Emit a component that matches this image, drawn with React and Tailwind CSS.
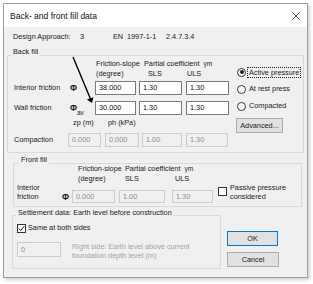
import React from 'react'

function Box({ w, value, disabled, h = 'h-[14px]' }) {
  return (
    <div className={`${w} ${h} shrink-0 border pl-[3px] flex items-center ${disabled ? 'border-[#cccccc] bg-[#f0f0f0] text-[#8d8d8d]' : 'border-[#7a7a7a] bg-white text-[#111]'}`}>
      {value}
    </div>
  )
}

function Radio({ checked, children }) {
  return (
    <div className="h-[12px] flex items-center pl-[1px]">
      <span className="w-[9px] h-[9px] rounded-full border border-[#333] bg-white flex items-center justify-center shrink-0">
        {checked && <span className="w-[4px] h-[4px] rounded-full bg-[#222]"></span>}
      </span>
      {children}
    </div>
  )
}

function Check({ checked }) {
  return (
    <span className="w-[9px] h-[9px] border border-[#333] bg-white shrink-0 flex items-center justify-center">
      {checked && (
        <svg width="7" height="7" viewBox="0 0 7 7">
          <path d="M0.8 3.6 L2.7 5.5 L6.2 1.2" fill="none" stroke="#222" strokeWidth="1" />
        </svg>
      )}
    </span>
  )
}

function Gamma() {
  return <span className="ml-[4px] text-[6.5px]">γm</span>
}

export default function App() {
  return (
    <div className="relative w-[313px] h-[284px] bg-white pt-[3px] pl-[3px] overflow-hidden whitespace-nowrap font-['Liberation_Sans',Arial,sans-serif] text-[7.3px] text-[#1a1a1a] leading-[10px]">
      <div className="w-[305px] h-[275px] border border-[#9c9c9c] bg-[#f0f0f0] flex flex-col shadow-[2px_2px_3px_rgba(0,0,0,0.18)]">
        {/* title bar */}
        <div className="h-[23px] bg-white flex items-center justify-between pl-[6px] pr-[7px]">
          <span className="text-[8.5px] text-[#111]">Back- and front fill data</span>
          <svg width="8" height="8" viewBox="0 0 8 8">
            <path d="M0.5 0.5 L7.5 7.5 M7.5 0.5 L0.5 7.5" stroke="#333" strokeWidth="0.9" />
          </svg>
        </div>

        {/* design approach */}
        <div className="mt-[5px] h-[10px] flex pl-[9px]">
          <span className="w-[67px]">Design Approach:</span>
          <span className="w-[33px]">3</span>
          <span className="w-[14px]">EN</span>
          <span className="w-[39px]">1997-1-1</span>
          <span>2.4.7.3.4</span>
        </div>

        {/* back fill */}
        <div className="relative mt-[13px] ml-[3px] w-[297px] h-[98px] shrink-0 border border-[#d9d9d9] flex">
          <span className="absolute -top-[9px] left-[3px] px-[2px] bg-[#f0f0f0]">Back fill</span>
          <div className="w-[224px] flex flex-col">
            <div className="mt-[3px] h-[10px] flex pl-[88px]">
              <span className="w-[48px]">Friction-slope</span>
              <span>Partial coefficient</span>
              <Gamma />
            </div>
            <div className="h-[10px] flex pl-[88px]">
              <span className="w-[52px]">(degree)</span>
              <span className="w-[39px]">SLS</span>
              <span>ULS</span>
            </div>
            <div className="mt-[2px] h-[14px] flex items-center">
              <span className="w-[62px] pl-[6px]">Interior friction</span>
              <span className="w-[25px] font-bold text-[8.5px]">Φ</span>
              <Box w="w-[41px]" value="38.000" />
              <div className="ml-[3px]"><Box w="w-[43px]" value="1.30" /></div>
              <div className="ml-[4px]"><Box w="w-[43px]" value="1.30" /></div>
            </div>
            <div className="mt-[6px] h-[14px] flex items-center">
              <span className="w-[62px] pl-[6px]">Wall friction</span>
              <span className="w-[25px] font-bold text-[8.5px]">Φ<sub className="font-normal text-[6.5px] align-[-2px]">av</sub></span>
              <Box w="w-[41px]" value="30.000" />
              <div className="ml-[3px]"><Box w="w-[43px]" value="1.30" /></div>
              <div className="ml-[4px]"><Box w="w-[43px]" value="1.30" /></div>
            </div>
            <div className="mt-[3px] h-[10px] flex pl-[65px]">
              <span className="w-[35px]">zp (m)</span>
              <span>ph (kPa)</span>
            </div>
            <div className="mt-[5px] h-[14px] flex items-center">
              <span className="w-[60px] pl-[6px]">Compaction</span>
              <Box w="w-[33px]" value="0.000" disabled />
              <div className="ml-[4px]"><Box w="w-[34px]" value="0.000" disabled /></div>
              <div className="ml-[3px]"><Box w="w-[40px]" value="1.00" disabled /></div>
              <div className="ml-[4px]"><Box w="w-[42px]" value="1.30" disabled /></div>
            </div>
          </div>
          <div className="flex flex-col pl-[4px]">
            <div className="mt-[10px]">
              <Radio checked>
                <span className="ml-[1px] border border-dotted border-[#222] px-[1px] leading-[9px]">Active pressure</span>
              </Radio>
            </div>
            <div className="mt-[5px]">
              <Radio><span className="ml-[3px]">At rest press</span></Radio>
            </div>
            <div className="mt-[5px]">
              <Radio><span className="ml-[3px]">Compacted</span></Radio>
            </div>
            <div className="mt-[6px] w-[47px] h-[15px] border border-[#adadad] bg-[#e1e1e1] flex items-center justify-center">
              Advanced...
            </div>
          </div>
        </div>

        {/* front fill */}
        <div className="relative mt-[10px] ml-[9px] w-[289px] h-[44px] shrink-0 border border-[#d9d9d9] flex flex-col">
          <span className="absolute -top-[9px] left-[5px] px-[2px] bg-[#f0f0f0]">Front fill</span>
          <div className="h-[10px] flex pl-[64px]">
            <span className="w-[47px]">Friction-slope</span>
            <span>Partial coefficient</span>
            <Gamma />
          </div>
          <div className="h-[10px] flex pl-[64px]">
            <span className="w-[47px]">(degree)</span>
            <span className="w-[50px]">SLS</span>
            <span>ULS</span>
          </div>
          <div className="h-[20px] flex items-start">
            <span className="w-[48px] pl-[3px] -mt-[1px] leading-[9px]">Interior<br />friction</span>
            <span className="w-[10px] mt-[8px] font-bold text-[8.5px]">Φ</span>
            <div className="mt-[6px]"><Box w="w-[43px]" h="h-[13px]" value="0.000" disabled /></div>
            <div className="mt-[6px] ml-[4px]"><Box w="w-[46px]" h="h-[13px]" value="1.00" disabled /></div>
            <div className="mt-[6px] ml-[7px]"><Box w="w-[41px]" h="h-[13px]" value="1.30" disabled /></div>
            <div className="mt-[3px] ml-[5px]"><Check /></div>
            <span className="ml-[3px] -mt-[1px] leading-[9px]">Passive pressure<br />considered</span>
          </div>
        </div>

        {/* settlement + buttons */}
        <div className="flex">
          <div className="relative mt-[8px] ml-[8px] w-[209px] h-[54px] shrink-0 border border-[#d9d9d9] flex flex-col">
            <span className="absolute -top-[8px] left-[3px] px-[2px] bg-[#f0f0f0]">Settlement data: Earth level before construction</span>
            <div className="mt-[7px] h-[10px] flex items-center pl-[4px]">
              <Check checked />
              <span className="ml-[2px]">Same at both sides</span>
            </div>
            <div className="mt-[9px] flex items-start pl-[4px]">
              <Box w="w-[44px]" h="h-[15px]" value="0" disabled />
              <span className="ml-[11px] leading-[9px] text-[#a3a3a3]">Right side: Earth level above current<br />foundation depth level (m)</span>
            </div>
          </div>
          <div className="ml-[6px] flex flex-col">
            <div className="mt-[24px] w-[51px] h-[15px] border border-[#0078d7] bg-[#e1e1e1] flex items-center justify-center">OK</div>
            <div className="mt-[6px] w-[52px] h-[15px] border border-[#adadad] bg-[#e1e1e1] flex items-center justify-center">Cancel</div>
          </div>
        </div>
      </div>

      {/* annotation arrow over the dialog */}
      <svg className="absolute left-0 top-0 pointer-events-none" width="313" height="284" viewBox="0 0 313 284">
        <line x1="73" y1="57" x2="90.5" y2="99" stroke="#000" strokeWidth="1.4" />
        <polygon points="92,103 86.9,99.6 93.4,97.2" fill="#000" />
      </svg>
    </div>
  )
}
